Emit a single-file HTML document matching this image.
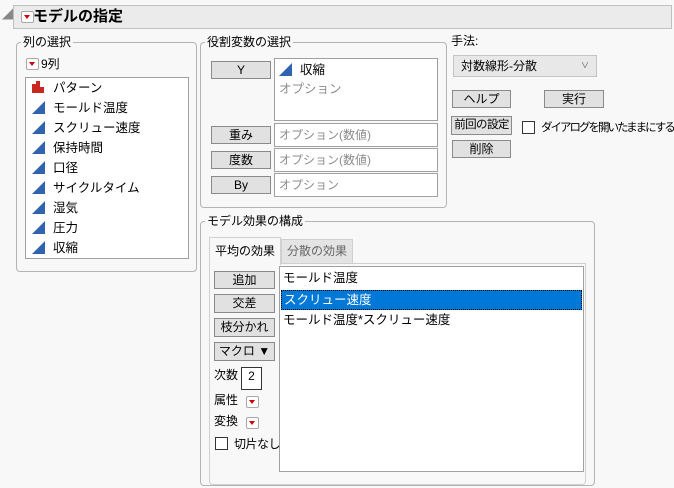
<!DOCTYPE html>
<html><head><meta charset="utf-8"><style>
*{box-sizing:border-box;margin:0;padding:0}
body{width:674px;height:488px;background:#f8f8f8;font-family:"Liberation Sans","Noto Sans CJK JP",sans-serif;font-size:12px;color:#000;position:relative;overflow:hidden;white-space:nowrap}
.a{position:absolute}
.grp{position:absolute;border:1px solid #b4b4b4;border-radius:4px}
.lg{position:absolute;background:#f8f8f8;padding:0 2px;font-size:12px;line-height:14px}
.btn{position:absolute;background:#e1e1e1;border:1px solid #8a8a8a;text-align:center;font-size:12px;line-height:16px;overflow:hidden}
.box{position:absolute;background:#fff;border:1px solid #a0a0a0}
.ph{color:#8c8c8c}
.rb{position:absolute;width:13px;height:12px;border:1px solid #a8a8a8;background:#fff;border-radius:2px}
.rb:after{content:"";position:absolute;left:2px;top:3px;border-left:3.5px solid transparent;border-right:3.5px solid transparent;border-top:4px solid #d00000}
.tri{display:inline-block;width:0;height:0;border-left:13px solid transparent;border-bottom:13px solid #2f63b0;vertical-align:-2px;margin-right:8px}
.row{position:absolute;left:6px;height:20px;line-height:20px;font-size:12.5px}
.cb{position:absolute;width:13px;height:13px;border:1px solid #333;background:#fff}
</style></head><body>
<div class="a" style="left:2px;top:8px;font-size:11px;color:#888;line-height:14px">&#9698;</div>
<div class="a" style="left:13px;top:5px;width:659px;height:24px;background:#ebebeb;border:1px solid #c0c0c0"></div>
<div class="rb" style="left:21px;top:11px"></div>
<div class="a" style="left:33px;top:7px;font-size:15px;font-weight:bold;line-height:20px">モデルの指定</div>

<div class="grp" style="left:16px;top:42px;width:181px;height:230px"></div>
<div class="lg" style="left:21px;top:35px">列の選択</div>
<div class="rb" style="left:26px;top:58px"></div>
<div class="a" style="left:41px;top:57px;line-height:14px">9列</div>
<div class="box" style="left:25px;top:77px;width:164px;height:182px">
 <div class="row" style="top:0px"><span style="display:inline-block;width:13px;height:12px;vertical-align:-1px;margin-right:8px;position:relative"><i class="a" style="left:0;top:3px;width:4px;height:9px;background:#c8281e"></i><i class="a" style="left:4px;top:0;width:4px;height:12px;background:#c8281e"></i><i class="a" style="left:8px;top:6px;width:4px;height:6px;background:#c8281e"></i></span>パターン</div>
 <div class="row" style="top:20px"><span class="tri"></span>モールド温度</div>
 <div class="row" style="top:40px"><span class="tri"></span>スクリュー速度</div>
 <div class="row" style="top:60px"><span class="tri"></span>保持時間</div>
 <div class="row" style="top:80px"><span class="tri"></span>口径</div>
 <div class="row" style="top:100px"><span class="tri"></span>サイクルタイム</div>
 <div class="row" style="top:120px"><span class="tri"></span>湿気</div>
 <div class="row" style="top:140px"><span class="tri"></span>圧力</div>
 <div class="row" style="top:160px"><span class="tri"></span>収縮</div>
</div>

<div class="grp" style="left:200px;top:42px;width:247px;height:166px"></div>
<div class="lg" style="left:205px;top:35px">役割変数の選択</div>
<div class="btn" style="left:211px;top:61px;width:60px;height:18px">Y</div>
<div class="box" style="left:274px;top:58px;width:164px;height:63px">
 <div class="row" style="top:1px;left:4px"><span class="tri"></span>収縮</div>
 <div class="row ph" style="top:20px;left:4px">オプション</div>
</div>
<div class="btn" style="left:211px;top:126px;width:60px;height:18px">重み</div>
<div class="box ph" style="left:274px;top:123px;width:164px;height:24px;padding:3px 4px;line-height:16px">オプション(数値)</div>
<div class="btn" style="left:211px;top:151px;width:60px;height:18px">度数</div>
<div class="box ph" style="left:274px;top:148px;width:164px;height:24px;padding:3px 4px;line-height:16px">オプション(数値)</div>
<div class="btn" style="left:211px;top:176px;width:60px;height:18px">By</div>
<div class="box ph" style="left:274px;top:173px;width:164px;height:24px;padding:3px 4px;line-height:16px">オプション</div>

<div class="a" style="left:451px;top:34px;line-height:14px">手法:</div>
<div class="a" style="left:453px;top:55px;width:144px;height:22px;background:#e8e8e8;border:1px solid #c4c4c4;padding:0 7px;line-height:20px">対数線形-分散<span class="a" style="right:7px;top:0;font-size:8px;color:#555">&#8744;</span></div>
<div class="btn" style="left:452px;top:90px;width:59px;height:18px">ヘルプ</div>
<div class="btn" style="left:544px;top:90px;width:60px;height:18px">実行</div>
<div class="btn" style="left:451px;top:116px;width:61px;height:19px;font-size:11.5px;letter-spacing:-0.6px">前回の設定</div>
<div class="cb" style="left:522px;top:121px"></div>
<div class="a" style="left:541px;top:120px;line-height:16px;font-size:11.5px;letter-spacing:-2px">ダイアログを開いたままにする</div>
<div class="btn" style="left:452px;top:140px;width:59px;height:18px">削除</div>

<div class="grp" style="left:200px;top:221px;width:395px;height:265px"></div>
<div class="lg" style="left:205px;top:214px">モデル効果の構成</div>
<div class="a" style="left:209px;top:263px;width:377px;height:222px;background:#f8f8f8;border:1px solid #d0d0d0;border-radius:0 0 4px 4px"></div>
<div class="a" style="left:281px;top:239px;width:72px;height:25px;background:#e4e4e4;border:1px solid #d0d0d0;color:#666;text-align:center;line-height:22px">分散の効果</div>
<div class="a" style="left:209px;top:237px;width:72px;height:28px;background:#f8f8f8;border:1px solid #d0d0d0;border-bottom:none;text-align:center;line-height:26px">平均の効果</div>
<div class="box" style="left:279px;top:266px;width:305px;height:206px;border-color:#a0a0a0">
 <div class="row" style="left:3px;top:1px">モールド温度</div>
 <div class="a" style="left:1px;top:23px;width:301px;height:20px;background:#0078d7;border:1px dotted #000;color:#fff;padding-left:2px;line-height:18px;font-size:12.5px">スクリュー速度</div>
 <div class="row" style="left:3px;top:43px">モールド温度*スクリュー速度</div>
</div>
<div class="btn" style="left:214px;top:271px;width:61px;height:18px">追加</div>
<div class="btn" style="left:214px;top:294px;width:61px;height:19px">交差</div>
<div class="btn" style="left:214px;top:318px;width:61px;height:19px">枝分かれ</div>
<div class="btn" style="left:214px;top:342px;width:61px;height:19px">マクロ &#9660;</div>
<div class="a" style="left:214px;top:367px;line-height:16px">次数</div>
<div class="a" style="left:241px;top:367px;width:21px;height:23px;background:#fff;border:1px solid #333;text-align:center;line-height:16px">2</div>
<div class="a" style="left:214px;top:392px;line-height:16px">属性</div>
<div class="rb" style="left:246px;top:396px"></div>
<div class="a" style="left:214px;top:413px;line-height:16px">変換</div>
<div class="rb" style="left:246px;top:417px"></div>
<div class="cb" style="left:215px;top:437px"></div>
<div class="a" style="left:234px;top:436px;line-height:16px;letter-spacing:-0.5px">切片なし</div>
</body></html>
